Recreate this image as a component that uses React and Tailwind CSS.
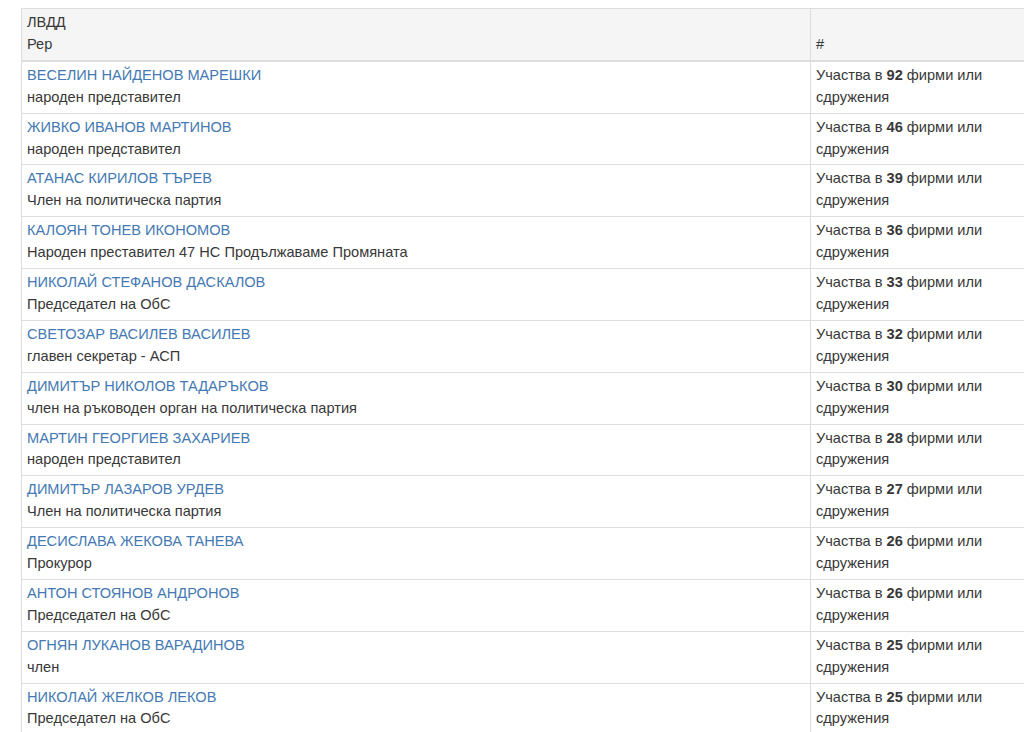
const rows = [
  ['ВЕСЕЛИН НАЙДЕНОВ МАРЕШКИ', 'народен представител', 92],
  ['ЖИВКО ИВАНОВ МАРТИНОВ', 'народен представител', 46],
  ['АТАНАС КИРИЛОВ ТЪРЕВ', 'Член на политическа партия', 39],
  ['КАЛОЯН ТОНЕВ ИКОНОМОВ', 'Народен преставител 47 НС Продължаваме Промяната', 36],
  ['НИКОЛАЙ СТЕФАНОВ ДАСКАЛОВ', 'Председател на ОбС', 33],
  ['СВЕТОЗАР ВАСИЛЕВ ВАСИЛЕВ', 'главен секретар - АСП', 32],
  ['ДИМИТЪР НИКОЛОВ ТАДАРЪКОВ', 'член на ръководен орган на политическа партия', 30],
  ['МАРТИН ГЕОРГИЕВ ЗАХАРИЕВ', 'народен представител', 28],
  ['ДИМИТЪР ЛАЗАРОВ УРДЕВ', 'Член на политическа партия', 27],
  ['ДЕСИСЛАВА ЖЕКОВА ТАНЕВА', 'Прокурор', 26],
  ['АНТОН СТОЯНОВ АНДРОНОВ', 'Председател на ОбС', 26],
  ['ОГНЯН ЛУКАНОВ ВАРАДИНОВ', 'член', 25],
  ['НИКОЛАЙ ЖЕЛКОВ ЛЕКОВ', 'Председател на ОбС', 25],
]

export default function App() {
  return (
    <div className="h-[732px] w-[1024px] overflow-hidden bg-white pt-[8px] pl-[21px] font-['Liberation_Sans',Arial,sans-serif] text-[14.6px] leading-[21.9px] text-[#383838]">
      <table className="w-[1100px] border-collapse">
        <thead>
          <tr className="bg-[#f5f5f5]">
            <th className="w-[789px] border border-b-2 border-[#ddd] px-[5px] pt-[3px] pb-[4px] text-left align-bottom font-normal">
              ЛВДД
              <br />
              Рер
            </th>
            <th className="border border-b-2 border-[#ddd] px-[5px] pt-[3px] pb-[4px] text-left align-bottom font-normal">
              #
            </th>
          </tr>
        </thead>
        <tbody>
          {rows.map(([name, role, n]) => (
            <tr key={name}>
              <td className="border border-[#ddd] px-[5px] pt-[3px] pb-[4px] align-top">
                <a href="#" className="text-[#4479b3]">{name}</a>
                <br />
                {role}
              </td>
              <td className="border border-[#ddd] px-[5px] pt-[3px] pb-[4px] align-top">
                Участва в <b>{n}</b> фирми или
                <br />
                сдружения
              </td>
            </tr>
          ))}
        </tbody>
      </table>
    </div>
  )
}
